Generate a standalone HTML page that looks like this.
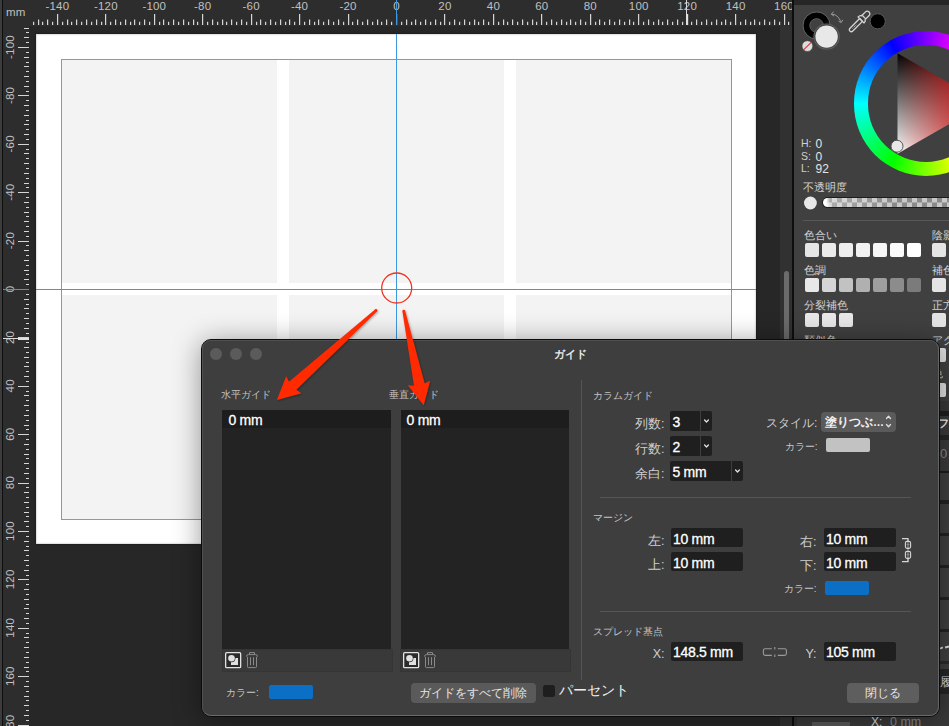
<!DOCTYPE html>
<html><head><meta charset="utf-8"><style>
*{margin:0;padding:0;box-sizing:border-box}
html,body{width:949px;height:726px;overflow:hidden;background:#272727;font-family:"Liberation Sans",sans-serif}
.abs{position:absolute}
.t{white-space:nowrap;line-height:16px}
.lbl{font-size:10px;color:#c4c4c4}
.sm{font-size:10px;color:#c8c8c8}
.rl{text-align:right}
.md{font-size:12.5px;color:#cfcfcf}
.val{font-size:14px;color:#fff;-webkit-text-stroke:0.3px #fff;letter-spacing:-0.3px}
.fld{background:#1f1f1f}
</style></head>
<body>

<div class="abs" style="left:0;top:0;width:792px;height:25.5px;background:#2d2d2d"></div>
<div class="abs" style="left:0;top:0;width:29px;height:726px;background:#2d2d2d"></div>
<div class="abs" style="left:0;top:0;width:2px;height:726px;background:#3c3c3c"></div>
<div class="abs" style="left:2px;top:0;width:1px;height:726px;background:#0f0f0f"></div>
<!-- page -->
<div class="abs" style="left:36px;top:34px;width:720px;height:510px;background:#fff;box-shadow:inset 0 0 2px rgba(0,0,0,.4),0 0 2px rgba(0,0,0,.5)"></div>
<!-- columns -->
<div class="abs" style="left:62px;top:60px;width:215px;height:223px;background:#f3f3f3"></div>
<div class="abs" style="left:289px;top:60px;width:215px;height:223px;background:#f3f3f3"></div>
<div class="abs" style="left:516px;top:60px;width:215px;height:223px;background:#f3f3f3"></div>
<div class="abs" style="left:62px;top:295px;width:215px;height:224px;background:#f3f3f3"></div>
<div class="abs" style="left:289px;top:295px;width:215px;height:224px;background:#f3f3f3"></div>
<div class="abs" style="left:516px;top:295px;width:215px;height:224px;background:#f3f3f3"></div>
<!-- margin rect -->
<div class="abs" style="left:61px;top:59px;width:671px;height:461px;border:1px solid #5aa5e6"></div>
<svg class="abs" style="left:0;top:0" width="949" height="726" viewBox="0 0 949 726">
<g fill="#d6d6d6"><rect x="33" y="21.8" width="1.2" height="3.2"/><rect x="38" y="19.5" width="1.2" height="5.5"/><rect x="42" y="21.8" width="1.2" height="3.2"/><rect x="47" y="19.5" width="1.2" height="5.5"/><rect x="52" y="21.8" width="1.2" height="3.2"/><rect x="57" y="14" width="1.2" height="11.0"/><rect x="62" y="21.8" width="1.2" height="3.2"/><rect x="67" y="19.5" width="1.2" height="5.5"/><rect x="71" y="21.8" width="1.2" height="3.2"/><rect x="76" y="19.5" width="1.2" height="5.5"/><rect x="81" y="21.8" width="1.2" height="3.2"/><rect x="86" y="19.5" width="1.2" height="5.5"/><rect x="91" y="21.8" width="1.2" height="3.2"/><rect x="96" y="19.5" width="1.2" height="5.5"/><rect x="101" y="21.8" width="1.2" height="3.2"/><rect x="105" y="14" width="1.2" height="11.0"/><rect x="110" y="21.8" width="1.2" height="3.2"/><rect x="115" y="19.5" width="1.2" height="5.5"/><rect x="120" y="21.8" width="1.2" height="3.2"/><rect x="125" y="19.5" width="1.2" height="5.5"/><rect x="130" y="21.8" width="1.2" height="3.2"/><rect x="134" y="19.5" width="1.2" height="5.5"/><rect x="139" y="21.8" width="1.2" height="3.2"/><rect x="144" y="19.5" width="1.2" height="5.5"/><rect x="149" y="21.8" width="1.2" height="3.2"/><rect x="154" y="14" width="1.2" height="11.0"/><rect x="159" y="21.8" width="1.2" height="3.2"/><rect x="163" y="19.5" width="1.2" height="5.5"/><rect x="168" y="21.8" width="1.2" height="3.2"/><rect x="173" y="19.5" width="1.2" height="5.5"/><rect x="178" y="21.8" width="1.2" height="3.2"/><rect x="183" y="19.5" width="1.2" height="5.5"/><rect x="188" y="21.8" width="1.2" height="3.2"/><rect x="193" y="19.5" width="1.2" height="5.5"/><rect x="197" y="21.8" width="1.2" height="3.2"/><rect x="202" y="14" width="1.2" height="11.0"/><rect x="207" y="21.8" width="1.2" height="3.2"/><rect x="212" y="19.5" width="1.2" height="5.5"/><rect x="217" y="21.8" width="1.2" height="3.2"/><rect x="222" y="19.5" width="1.2" height="5.5"/><rect x="226" y="21.8" width="1.2" height="3.2"/><rect x="231" y="19.5" width="1.2" height="5.5"/><rect x="236" y="21.8" width="1.2" height="3.2"/><rect x="241" y="19.5" width="1.2" height="5.5"/><rect x="246" y="21.8" width="1.2" height="3.2"/><rect x="251" y="14" width="1.2" height="11.0"/><rect x="256" y="21.8" width="1.2" height="3.2"/><rect x="260" y="19.5" width="1.2" height="5.5"/><rect x="265" y="21.8" width="1.2" height="3.2"/><rect x="270" y="19.5" width="1.2" height="5.5"/><rect x="275" y="21.8" width="1.2" height="3.2"/><rect x="280" y="19.5" width="1.2" height="5.5"/><rect x="285" y="21.8" width="1.2" height="3.2"/><rect x="289" y="19.5" width="1.2" height="5.5"/><rect x="294" y="21.8" width="1.2" height="3.2"/><rect x="299" y="14" width="1.2" height="11.0"/><rect x="304" y="21.8" width="1.2" height="3.2"/><rect x="309" y="19.5" width="1.2" height="5.5"/><rect x="314" y="21.8" width="1.2" height="3.2"/><rect x="318" y="19.5" width="1.2" height="5.5"/><rect x="323" y="21.8" width="1.2" height="3.2"/><rect x="328" y="19.5" width="1.2" height="5.5"/><rect x="333" y="21.8" width="1.2" height="3.2"/><rect x="338" y="19.5" width="1.2" height="5.5"/><rect x="343" y="21.8" width="1.2" height="3.2"/><rect x="348" y="14" width="1.2" height="11.0"/><rect x="352" y="21.8" width="1.2" height="3.2"/><rect x="357" y="19.5" width="1.2" height="5.5"/><rect x="362" y="21.8" width="1.2" height="3.2"/><rect x="367" y="19.5" width="1.2" height="5.5"/><rect x="372" y="21.8" width="1.2" height="3.2"/><rect x="377" y="19.5" width="1.2" height="5.5"/><rect x="381" y="21.8" width="1.2" height="3.2"/><rect x="386" y="19.5" width="1.2" height="5.5"/><rect x="391" y="21.8" width="1.2" height="3.2"/><rect x="396" y="14" width="1.2" height="11.0"/><rect x="401" y="21.8" width="1.2" height="3.2"/><rect x="406" y="19.5" width="1.2" height="5.5"/><rect x="411" y="21.8" width="1.2" height="3.2"/><rect x="415" y="19.5" width="1.2" height="5.5"/><rect x="420" y="21.8" width="1.2" height="3.2"/><rect x="425" y="19.5" width="1.2" height="5.5"/><rect x="430" y="21.8" width="1.2" height="3.2"/><rect x="435" y="19.5" width="1.2" height="5.5"/><rect x="440" y="21.8" width="1.2" height="3.2"/><rect x="444" y="14" width="1.2" height="11.0"/><rect x="449" y="21.8" width="1.2" height="3.2"/><rect x="454" y="19.5" width="1.2" height="5.5"/><rect x="459" y="21.8" width="1.2" height="3.2"/><rect x="464" y="19.5" width="1.2" height="5.5"/><rect x="469" y="21.8" width="1.2" height="3.2"/><rect x="474" y="19.5" width="1.2" height="5.5"/><rect x="478" y="21.8" width="1.2" height="3.2"/><rect x="483" y="19.5" width="1.2" height="5.5"/><rect x="488" y="21.8" width="1.2" height="3.2"/><rect x="493" y="14" width="1.2" height="11.0"/><rect x="498" y="21.8" width="1.2" height="3.2"/><rect x="503" y="19.5" width="1.2" height="5.5"/><rect x="507" y="21.8" width="1.2" height="3.2"/><rect x="512" y="19.5" width="1.2" height="5.5"/><rect x="517" y="21.8" width="1.2" height="3.2"/><rect x="522" y="19.5" width="1.2" height="5.5"/><rect x="527" y="21.8" width="1.2" height="3.2"/><rect x="532" y="19.5" width="1.2" height="5.5"/><rect x="536" y="21.8" width="1.2" height="3.2"/><rect x="541" y="14" width="1.2" height="11.0"/><rect x="546" y="21.8" width="1.2" height="3.2"/><rect x="551" y="19.5" width="1.2" height="5.5"/><rect x="556" y="21.8" width="1.2" height="3.2"/><rect x="561" y="19.5" width="1.2" height="5.5"/><rect x="566" y="21.8" width="1.2" height="3.2"/><rect x="570" y="19.5" width="1.2" height="5.5"/><rect x="575" y="21.8" width="1.2" height="3.2"/><rect x="580" y="19.5" width="1.2" height="5.5"/><rect x="585" y="21.8" width="1.2" height="3.2"/><rect x="590" y="14" width="1.2" height="11.0"/><rect x="595" y="21.8" width="1.2" height="3.2"/><rect x="599" y="19.5" width="1.2" height="5.5"/><rect x="604" y="21.8" width="1.2" height="3.2"/><rect x="609" y="19.5" width="1.2" height="5.5"/><rect x="614" y="21.8" width="1.2" height="3.2"/><rect x="619" y="19.5" width="1.2" height="5.5"/><rect x="624" y="21.8" width="1.2" height="3.2"/><rect x="629" y="19.5" width="1.2" height="5.5"/><rect x="633" y="21.8" width="1.2" height="3.2"/><rect x="638" y="14" width="1.2" height="11.0"/><rect x="643" y="21.8" width="1.2" height="3.2"/><rect x="648" y="19.5" width="1.2" height="5.5"/><rect x="653" y="21.8" width="1.2" height="3.2"/><rect x="658" y="19.5" width="1.2" height="5.5"/><rect x="662" y="21.8" width="1.2" height="3.2"/><rect x="667" y="19.5" width="1.2" height="5.5"/><rect x="672" y="21.8" width="1.2" height="3.2"/><rect x="677" y="19.5" width="1.2" height="5.5"/><rect x="682" y="21.8" width="1.2" height="3.2"/><rect x="687" y="14" width="1.2" height="11.0"/><rect x="691" y="21.8" width="1.2" height="3.2"/><rect x="696" y="19.5" width="1.2" height="5.5"/><rect x="701" y="21.8" width="1.2" height="3.2"/><rect x="706" y="19.5" width="1.2" height="5.5"/><rect x="711" y="21.8" width="1.2" height="3.2"/><rect x="716" y="19.5" width="1.2" height="5.5"/><rect x="721" y="21.8" width="1.2" height="3.2"/><rect x="725" y="19.5" width="1.2" height="5.5"/><rect x="730" y="21.8" width="1.2" height="3.2"/><rect x="735" y="14" width="1.2" height="11.0"/><rect x="740" y="21.8" width="1.2" height="3.2"/><rect x="745" y="19.5" width="1.2" height="5.5"/><rect x="750" y="21.8" width="1.2" height="3.2"/><rect x="754" y="19.5" width="1.2" height="5.5"/><rect x="759" y="21.8" width="1.2" height="3.2"/><rect x="764" y="19.5" width="1.2" height="5.5"/><rect x="769" y="21.8" width="1.2" height="3.2"/><rect x="774" y="19.5" width="1.2" height="5.5"/><rect x="779" y="21.8" width="1.2" height="3.2"/><rect x="784" y="14" width="1.2" height="11.0"/><rect x="788" y="21.8" width="1.2" height="3.2"/><rect x="24" y="28" width="5" height="1"/><rect x="26" y="32" width="3" height="1"/><rect x="24" y="37" width="5" height="1"/><rect x="26" y="42" width="3" height="1"/><rect x="18" y="47" width="11" height="1"/><rect x="26" y="52" width="3" height="1"/><rect x="24" y="57" width="5" height="1"/><rect x="26" y="62" width="3" height="1"/><rect x="24" y="66" width="5" height="1"/><rect x="26" y="71" width="3" height="1"/><rect x="24" y="76" width="5" height="1"/><rect x="26" y="81" width="3" height="1"/><rect x="24" y="86" width="5" height="1"/><rect x="26" y="91" width="3" height="1"/><rect x="18" y="95" width="11" height="1"/><rect x="26" y="100" width="3" height="1"/><rect x="24" y="105" width="5" height="1"/><rect x="26" y="110" width="3" height="1"/><rect x="24" y="115" width="5" height="1"/><rect x="26" y="120" width="3" height="1"/><rect x="24" y="124" width="5" height="1"/><rect x="26" y="129" width="3" height="1"/><rect x="24" y="134" width="5" height="1"/><rect x="26" y="139" width="3" height="1"/><rect x="18" y="144" width="11" height="1"/><rect x="26" y="149" width="3" height="1"/><rect x="24" y="153" width="5" height="1"/><rect x="26" y="158" width="3" height="1"/><rect x="24" y="163" width="5" height="1"/><rect x="26" y="168" width="3" height="1"/><rect x="24" y="173" width="5" height="1"/><rect x="26" y="178" width="3" height="1"/><rect x="24" y="183" width="5" height="1"/><rect x="26" y="187" width="3" height="1"/><rect x="18" y="192" width="11" height="1"/><rect x="26" y="197" width="3" height="1"/><rect x="24" y="202" width="5" height="1"/><rect x="26" y="207" width="3" height="1"/><rect x="24" y="212" width="5" height="1"/><rect x="26" y="216" width="3" height="1"/><rect x="24" y="221" width="5" height="1"/><rect x="26" y="226" width="3" height="1"/><rect x="24" y="231" width="5" height="1"/><rect x="26" y="236" width="3" height="1"/><rect x="18" y="241" width="11" height="1"/><rect x="26" y="245" width="3" height="1"/><rect x="24" y="250" width="5" height="1"/><rect x="26" y="255" width="3" height="1"/><rect x="24" y="260" width="5" height="1"/><rect x="26" y="265" width="3" height="1"/><rect x="24" y="270" width="5" height="1"/><rect x="26" y="274" width="3" height="1"/><rect x="24" y="279" width="5" height="1"/><rect x="26" y="284" width="3" height="1"/><rect x="18" y="289" width="11" height="1"/><rect x="26" y="294" width="3" height="1"/><rect x="24" y="299" width="5" height="1"/><rect x="26" y="304" width="3" height="1"/><rect x="24" y="308" width="5" height="1"/><rect x="26" y="313" width="3" height="1"/><rect x="24" y="318" width="5" height="1"/><rect x="26" y="323" width="3" height="1"/><rect x="24" y="328" width="5" height="1"/><rect x="26" y="333" width="3" height="1"/><rect x="18" y="337" width="11" height="1"/><rect x="26" y="342" width="3" height="1"/><rect x="24" y="347" width="5" height="1"/><rect x="26" y="352" width="3" height="1"/><rect x="24" y="357" width="5" height="1"/><rect x="26" y="362" width="3" height="1"/><rect x="24" y="366" width="5" height="1"/><rect x="26" y="371" width="3" height="1"/><rect x="24" y="376" width="5" height="1"/><rect x="26" y="381" width="3" height="1"/><rect x="18" y="386" width="11" height="1"/><rect x="26" y="391" width="3" height="1"/><rect x="24" y="395" width="5" height="1"/><rect x="26" y="400" width="3" height="1"/><rect x="24" y="405" width="5" height="1"/><rect x="26" y="410" width="3" height="1"/><rect x="24" y="415" width="5" height="1"/><rect x="26" y="420" width="3" height="1"/><rect x="24" y="425" width="5" height="1"/><rect x="26" y="429" width="3" height="1"/><rect x="18" y="434" width="11" height="1"/><rect x="26" y="439" width="3" height="1"/><rect x="24" y="444" width="5" height="1"/><rect x="26" y="449" width="3" height="1"/><rect x="24" y="454" width="5" height="1"/><rect x="26" y="458" width="3" height="1"/><rect x="24" y="463" width="5" height="1"/><rect x="26" y="468" width="3" height="1"/><rect x="24" y="473" width="5" height="1"/><rect x="26" y="478" width="3" height="1"/><rect x="18" y="483" width="11" height="1"/><rect x="26" y="487" width="3" height="1"/><rect x="24" y="492" width="5" height="1"/><rect x="26" y="497" width="3" height="1"/><rect x="24" y="502" width="5" height="1"/><rect x="26" y="507" width="3" height="1"/><rect x="24" y="512" width="5" height="1"/><rect x="26" y="516" width="3" height="1"/><rect x="24" y="521" width="5" height="1"/><rect x="26" y="526" width="3" height="1"/><rect x="18" y="531" width="11" height="1"/><rect x="26" y="536" width="3" height="1"/><rect x="24" y="541" width="5" height="1"/><rect x="26" y="546" width="3" height="1"/><rect x="24" y="550" width="5" height="1"/><rect x="26" y="555" width="3" height="1"/><rect x="24" y="560" width="5" height="1"/><rect x="26" y="565" width="3" height="1"/><rect x="24" y="570" width="5" height="1"/><rect x="26" y="575" width="3" height="1"/><rect x="18" y="579" width="11" height="1"/><rect x="26" y="584" width="3" height="1"/><rect x="24" y="589" width="5" height="1"/><rect x="26" y="594" width="3" height="1"/><rect x="24" y="599" width="5" height="1"/><rect x="26" y="604" width="3" height="1"/><rect x="24" y="608" width="5" height="1"/><rect x="26" y="613" width="3" height="1"/><rect x="24" y="618" width="5" height="1"/><rect x="26" y="623" width="3" height="1"/><rect x="18" y="628" width="11" height="1"/><rect x="26" y="633" width="3" height="1"/><rect x="24" y="637" width="5" height="1"/><rect x="26" y="642" width="3" height="1"/><rect x="24" y="647" width="5" height="1"/><rect x="26" y="652" width="3" height="1"/><rect x="24" y="657" width="5" height="1"/><rect x="26" y="662" width="3" height="1"/><rect x="24" y="667" width="5" height="1"/><rect x="26" y="671" width="3" height="1"/><rect x="18" y="676" width="11" height="1"/><rect x="26" y="681" width="3" height="1"/><rect x="24" y="686" width="5" height="1"/><rect x="26" y="691" width="3" height="1"/><rect x="24" y="696" width="5" height="1"/><rect x="26" y="700" width="3" height="1"/><rect x="24" y="705" width="5" height="1"/><rect x="26" y="710" width="3" height="1"/><rect x="24" y="715" width="5" height="1"/><rect x="26" y="720" width="3" height="1"/><rect x="18" y="725" width="11" height="1"/></g>
<g fill="#c0c0c0" font-family="Liberation Sans, sans-serif" font-size="11.5" letter-spacing="0.2"><text x="57.4" y="10" text-anchor="middle">-140</text><text x="105.9" y="10" text-anchor="middle">-120</text><text x="154.3" y="10" text-anchor="middle">-100</text><text x="202.7" y="10" text-anchor="middle">-80</text><text x="251.2" y="10" text-anchor="middle">-60</text><text x="299.6" y="10" text-anchor="middle">-40</text><text x="348.1" y="10" text-anchor="middle">-20</text><text x="396.5" y="10" text-anchor="middle">0</text><text x="444.9" y="10" text-anchor="middle">20</text><text x="493.4" y="10" text-anchor="middle">40</text><text x="541.8" y="10" text-anchor="middle">60</text><text x="590.3" y="10" text-anchor="middle">80</text><text x="638.7" y="10" text-anchor="middle">100</text><text x="687.1" y="10" text-anchor="middle">120</text><text x="735.6" y="10" text-anchor="middle">140</text><text x="784.0" y="10" text-anchor="middle">160</text><text x="0" y="0" transform="translate(14,47.0) rotate(-90)" text-anchor="middle">-100</text><text x="0" y="0" transform="translate(14,95.4) rotate(-90)" text-anchor="middle">-80</text><text x="0" y="0" transform="translate(14,143.8) rotate(-90)" text-anchor="middle">-60</text><text x="0" y="0" transform="translate(14,192.2) rotate(-90)" text-anchor="middle">-40</text><text x="0" y="0" transform="translate(14,240.6) rotate(-90)" text-anchor="middle">-20</text><text x="0" y="0" transform="translate(14,289.0) rotate(-90)" text-anchor="middle">0</text><text x="0" y="0" transform="translate(14,337.4) rotate(-90)" text-anchor="middle">20</text><text x="0" y="0" transform="translate(14,385.8) rotate(-90)" text-anchor="middle">40</text><text x="0" y="0" transform="translate(14,434.2) rotate(-90)" text-anchor="middle">60</text><text x="0" y="0" transform="translate(14,482.6) rotate(-90)" text-anchor="middle">80</text><text x="0" y="0" transform="translate(14,531.0) rotate(-90)" text-anchor="middle">100</text><text x="0" y="0" transform="translate(14,579.4) rotate(-90)" text-anchor="middle">120</text><text x="0" y="0" transform="translate(14,627.8) rotate(-90)" text-anchor="middle">140</text><text x="0" y="0" transform="translate(14,676.2) rotate(-90)" text-anchor="middle">160</text><text x="0" y="0" transform="translate(14,724.6) rotate(-90)" text-anchor="middle">180</text><text x="6" y="15.5">mm</text></g>
</svg>
<div class="abs" style="left:686px;top:0;width:1px;height:25px;background:#d8d8d8"></div>
<div class="abs" style="left:686px;top:14px;width:2px;height:11px;background:#e0e0e0"></div>
<div class="abs" style="left:3px;top:338px;width:26px;height:1px;background:#d8d8d8"></div>
<div class="abs" style="left:18px;top:338px;width:11px;height:1.6px;background:#e0e0e0"></div>
<!-- guides -->
<div class="abs" style="left:396px;top:0;width:1px;height:25px;background:#3d98e0"></div>
<div class="abs" style="left:396px;top:34px;width:1px;height:510px;background:#3d98e0"></div>
<div class="abs" style="left:36px;top:289px;width:720px;height:1px;background:#3d98e0"></div>
<div class="abs" style="left:3px;top:289px;width:26px;height:1px;background:#3d98e0"></div>
<!-- scroll track -->
<div class="abs" style="left:780px;top:25.5px;width:12px;height:701px;background:#313131"></div>
<div class="abs" style="left:792px;top:0;width:2px;height:726px;background:#0e0e0e"></div>
<div class="abs" style="left:783.5px;top:271px;width:5.5px;height:400px;border-radius:3px;background:#6b6b6b"></div>


<div class="abs" style="left:794px;top:0;width:155px;height:726px;background:#404040"></div>
<div class="abs" style="left:794px;top:0;width:155px;height:5px;background:#262626"></div>
<!-- color wheel -->
<div class="abs" style="left:853.7px;top:31.1px;width:144.6px;height:144.6px;border-radius:50%;background:conic-gradient(from 90deg,#f00,#ff0,#0f0,#0ff,#00f,#f0f,#f00)"></div>
<div class="abs" style="left:867.8px;top:45.2px;width:116.4px;height:116.4px;border-radius:50%;background:#404040"></div>
<svg class="abs" style="left:794px;top:0" width="155" height="240" viewBox="794 0 155 240">
<defs>
<linearGradient id="ringg" x1="808" y1="17" x2="826" y2="35" gradientUnits="userSpaceOnUse"><stop offset="0" stop-color="#000"/><stop offset="0.55" stop-color="#000"/><stop offset="1" stop-color="#3a3a3a"/></linearGradient>
<linearGradient id="tv" x1="0" y1="53" x2="0" y2="154" gradientUnits="userSpaceOnUse"><stop offset="0" stop-color="#000"/><stop offset="1" stop-color="#fff"/></linearGradient>
<linearGradient id="th" x1="897.5" y1="0" x2="984" y2="0" gradientUnits="userSpaceOnUse"><stop offset="0" stop-color="#e01010" stop-opacity="0"/><stop offset="1" stop-color="#e01010" stop-opacity="1"/></linearGradient>
</defs>
<polygon points="897.5,53.2 897.5,153.8 984.6,103.5" fill="url(#tv)"/>
<polygon points="897.5,53.2 897.5,153.8 984.6,103.5" fill="url(#th)"/>
<circle cx="897" cy="146.2" r="6" fill="#e8e8e8" stroke="#555" stroke-width="1"/>
<!-- fg/bg swatches -->
<circle cx="816.6" cy="25.5" r="10.1" fill="none" stroke="url(#ringg)" stroke-width="6.4"/>
<circle cx="816.6" cy="25.5" r="13.6" fill="none" stroke="#626262" stroke-width="1"/>
<circle cx="816.6" cy="25.5" r="6.8" fill="none" stroke="#5a5a5a" stroke-width="1"/>
<circle cx="826.6" cy="36.6" r="12.6" fill="#404040" stroke="#5c5c5c" stroke-width="1.2"/>
<circle cx="826.6" cy="36.6" r="11.2" fill="#e8e8e8"/>
<circle cx="807.4" cy="46.1" r="5.4" fill="#dcdcdc" stroke="#404040" stroke-width="0.6"/>
<line x1="803.8" y1="49.6" x2="811" y2="42.6" stroke="#e8313c" stroke-width="1.2"/>
<path d="M831.5,14.2 Q837,13.5 841,21.8" fill="none" stroke="#999" stroke-width="1"/>
<path d="M833.6,11.6 L831.3,14.2 L834.1,16.1" fill="none" stroke="#999" stroke-width="1"/>
<path d="M838.6,21.2 L841.2,22.6 L842.8,19.8" fill="none" stroke="#999" stroke-width="1"/>
<!-- eyedropper -->
<g transform="translate(850.8,30.2) rotate(45)" fill="none" stroke="#d4d4d4" stroke-width="1.3" stroke-linejoin="round">
<path d="M-2,-1.2 Q-2,1.3 0,1.3 Q2,1.3 2,-1.2 V-14.5 H-2 Z"/>
<path d="M-4.2,-14.5 H4.2 Q4.2,-17.2 2.6,-17.6 V-18.6 H-2.6 V-17.6 Q-4.2,-17.2 -4.2,-14.5 Z"/>
<path d="M-2.6,-18.6 V-23 Q-2.6,-25.8 0,-25.8 Q2.6,-25.8 2.6,-23 V-18.6"/>
</g>
<path d="M852.6,28.4 L856.2,24.8" stroke="#cfcfcf" stroke-width="0.9" stroke-dasharray="1.1 0.9"/>
<circle cx="877.7" cy="21.3" r="7.6" fill="#000" stroke="#595959" stroke-width="1"/>
<!-- opacity slider -->
<circle cx="810.4" cy="203" r="6.4" fill="#e8e8e8"/>
</svg>
<div class="abs" style="left:822px;top:197px;width:140px;height:11px;border-radius:5.5px;background:#1d1d1d"></div>
<div class="abs" style="left:823px;top:198px;width:140px;height:9px;border-radius:4.5px;background:linear-gradient(90deg,#fff 0,#fff 3px,rgba(255,255,255,.3) 7px,rgba(255,255,255,0) 70px),repeating-conic-gradient(#c8c8c8 0 25%,#8a8a8a 0 50%) 4px -0.5px/10px 10px"></div>
<div class="abs t" style="left:801px;top:137px;font-size:10.5px;color:#d0d0d0;line-height:12.5px">H:<br>S:<br>L:</div>
<div class="abs t" style="left:815.5px;top:138px;font-size:12px;color:#e4e4e4;line-height:12.5px">0<br>0<br>92</div>
<div class="abs t" style="left:803px;top:179px;font-size:11px;color:#d0d0d0">不透明度</div>
<div class="abs" style="left:803px;top:220px;width:146px;height:1px;background:#575757"></div>
<div class="abs t" style="left:804px;top:227px;font-size:11px;color:#d0d0d0">色合い</div>
<div class="abs t" style="left:932px;top:227px;font-size:11px;color:#d0d0d0">陰影</div>
<div class="abs t" style="left:804px;top:262px;font-size:11px;color:#d0d0d0">色調</div>
<div class="abs t" style="left:932px;top:262px;font-size:11px;color:#d0d0d0">補色</div>
<div class="abs t" style="left:804px;top:297px;font-size:11px;color:#d0d0d0">分裂補色</div>
<div class="abs t" style="left:932px;top:297px;font-size:11px;color:#d0d0d0">正方</div>
<div class="abs t" style="left:804px;top:332px;font-size:11px;color:#d0d0d0">類似色</div>
<div class="abs t" style="left:932px;top:332px;font-size:11px;color:#d0d0d0">アク</div>
<div class="abs" style="left:805px;top:243px;width:14px;height:14px;border-radius:2px;background:#e5e5e5"></div>
<div class="abs" style="left:822px;top:243px;width:14px;height:14px;border-radius:2px;background:#eaeaea"></div>
<div class="abs" style="left:839px;top:243px;width:14px;height:14px;border-radius:2px;background:#eeeeee"></div>
<div class="abs" style="left:856px;top:243px;width:14px;height:14px;border-radius:2px;background:#f2f2f2"></div>
<div class="abs" style="left:873px;top:243px;width:14px;height:14px;border-radius:2px;background:#f6f6f6"></div>
<div class="abs" style="left:890px;top:243px;width:14px;height:14px;border-radius:2px;background:#fafafa"></div>
<div class="abs" style="left:907px;top:243px;width:14px;height:14px;border-radius:2px;background:#ffffff"></div>
<div class="abs" style="left:805px;top:278px;width:14px;height:14px;border-radius:2px;background:#e8e8e8"></div>
<div class="abs" style="left:822px;top:278px;width:14px;height:14px;border-radius:2px;background:#d5d5d5"></div>
<div class="abs" style="left:839px;top:278px;width:14px;height:14px;border-radius:2px;background:#c2c2c2"></div>
<div class="abs" style="left:856px;top:278px;width:14px;height:14px;border-radius:2px;background:#b0b0b0"></div>
<div class="abs" style="left:873px;top:278px;width:14px;height:14px;border-radius:2px;background:#9e9e9e"></div>
<div class="abs" style="left:890px;top:278px;width:14px;height:14px;border-radius:2px;background:#8c8c8c"></div>
<div class="abs" style="left:907px;top:278px;width:14px;height:14px;border-radius:2px;background:#7b7b7b"></div>
<div class="abs" style="left:805px;top:313px;width:14px;height:14px;border-radius:2px;background:#e8e8e8"></div>
<div class="abs" style="left:822px;top:313px;width:14px;height:14px;border-radius:2px;background:#e8e8e8"></div>
<div class="abs" style="left:839px;top:313px;width:14px;height:14px;border-radius:2px;background:#e8e8e8"></div>
<div class="abs" style="left:932px;top:243px;width:14px;height:14px;border-radius:2px;background:#e4e4e4"></div>
<div class="abs" style="left:932px;top:278px;width:14px;height:14px;border-radius:2px;background:#e4e4e4"></div>
<div class="abs" style="left:932px;top:313px;width:14px;height:14px;border-radius:2px;background:#e4e4e4"></div>
<div class="abs" style="left:932px;top:348px;width:14px;height:14px;border-radius:2px;background:#e4e4e4"></div>

<div class="abs" style="left:932px;top:383px;width:14px;height:14px;border-radius:2px;background:#e4e4e4"></div>
<div class="abs t" style="left:932px;top:365px;font-size:11px;color:#d0d0d0">色</div>
<div class="abs" style="left:794px;top:401px;width:155px;height:10px;background:#383838"></div>
<div class="abs" style="left:794px;top:411px;width:155px;height:5px;background:#1f1f1f"></div>
<div class="abs" style="left:794px;top:416px;width:155px;height:19px;background:#3a3a3a"></div>
<div class="abs t" style="left:938px;top:415px;font-size:11px;font-weight:bold;color:#f0f0f0">フ</div>
<div class="abs" style="left:794px;top:435px;width:155px;height:5px;background:#262626"></div>
<div class="abs" style="left:794px;top:440px;width:155px;height:31px;background:#3b3b3b"></div>
<div class="abs t" style="left:940px;top:446px;font-size:13px;color:#8a8a8a">0</div>
<div class="abs" style="left:794px;top:471px;width:155px;height:1.5px;background:#1e1e1e"></div>
<div class="abs" style="left:794px;top:500px;width:155px;height:3.5px;background:#232323"></div>
<div class="abs" style="left:794px;top:533px;width:155px;height:3px;background:#232323"></div>
<div class="abs" style="left:794px;top:565px;width:155px;height:3px;background:#232323"></div>
<div class="abs" style="left:794px;top:597px;width:155px;height:3px;background:#232323"></div>
<div class="abs" style="left:794px;top:629px;width:155px;height:3px;background:#232323"></div>
<div class="abs" style="left:940px;top:647px;width:3px;height:2px;background:#ddd;transform:rotate(-30deg)"></div>
<div class="abs" style="left:945px;top:646px;width:4px;height:2px;background:#ddd;transform:rotate(-15deg)"></div>
<div class="abs" style="left:794px;top:661px;width:155px;height:3px;background:#2c2c2c"></div>
<div class="abs" style="left:794px;top:669px;width:155px;height:25px;background:#262626"></div>
<div class="abs t" style="left:940px;top:674px;font-size:12px;color:#d8d8d8">履</div>
<div class="abs" style="left:794px;top:694px;width:155px;height:32px;background:#3a3a3a"></div>
<div class="abs" style="left:794px;top:694px;width:3px;height:32px;background:#323232"></div>
<div class="abs" style="left:812px;top:722px;width:38px;height:4px;background:#5a5a5a"></div>
<div class="abs t" style="left:871px;top:714px;font-size:12px;color:#dcdcdc">X:</div>
<div class="abs t" style="left:890px;top:714px;font-size:12.5px;color:#8c8c8c">0 mm</div>


<div class="abs" style="left:201px;top:339px;width:739px;height:378px;border-radius:10px;box-shadow:0 3px 28px rgba(0,0,0,.4)"></div>
<div class="abs" style="left:201px;top:339px;width:739px;height:378px;background:#3e3e3e;border:1px solid #0c0c0c;border-radius:10px"></div>
<div class="abs" style="left:202px;top:340px;width:737px;height:376px;border:1px solid;border-color:#505050 #646464 #6a6a6a #505050;border-radius:9px"></div>
<div class="abs" style="left:210px;top:348px;width:12px;height:12px;border-radius:50%;background:#5b5b5b"></div>
<div class="abs" style="left:230px;top:348px;width:12px;height:12px;border-radius:50%;background:#5b5b5b"></div>
<div class="abs" style="left:250px;top:348px;width:12px;height:12px;border-radius:50%;background:#5b5b5b"></div>
<div class="abs t" style="left:520px;top:346px;width:100px;text-align:center;font-size:10.5px;font-weight:bold;color:#e8e8e8">ガイド</div>
<div class="abs t lbl" style="left:221px;top:387px">水平ガイド</div>
<div class="abs t lbl" style="left:389px;top:387px">垂直ガイド</div>
<!-- lists -->
<div class="abs" style="left:222px;top:410px;width:169px;height:238.5px;background:#232323"></div>
<div class="abs" style="left:222px;top:410px;width:169px;height:18px;background:#1d1d1d"></div>
<div class="abs t val" style="left:228.5px;top:412px">0 mm</div>
<div class="abs" style="left:221.5px;top:648.5px;width:171px;height:23px;background:#393939;border:1px solid #353535"></div>
<div class="abs" style="left:401px;top:410px;width:168px;height:238.5px;background:#232323"></div>
<div class="abs" style="left:401px;top:410px;width:168px;height:18px;background:#1d1d1d"></div>
<div class="abs t val" style="left:406.6px;top:412px">0 mm</div>
<div class="abs" style="left:399.5px;top:648.5px;width:171px;height:23px;background:#393939;border:1px solid #353535"></div>
<svg class="abs" style="left:0;top:0" width="949" height="726">
<g transform="translate(225,652)"><rect x="0.65" y="0.65" width="15" height="15" rx="1" fill="#2b2b2b" stroke="#e2e2e2" stroke-width="1.3"/>
<rect x="6" y="6" width="7" height="7" fill="#e0e0e0"/>
<circle cx="6.5" cy="6.3" r="3.9" fill="#2b2b2b"/>
<circle cx="6.5" cy="6.3" r="3.3" fill="#e0e0e0"/></g>
<g transform="translate(246,652)"><g fill="none" stroke="#8a8a8a" stroke-width="1">
<path d="M0.5,4.6 Q0.5,2.6 2.5,2.6 H9.5 Q11.5,2.6 11.5,4.6"/>
<path d="M3.5,2.6 V0.6 H8.5 V2.6"/>
<path d="M1.5,4.8 V14.8 Q1.5,15.6 2.5,15.6 H9.5 Q10.5,15.6 10.5,14.8 V4.8"/>
<path d="M4.5,5.2 V13.2 M7.5,5.2 V13.2"/>
</g></g>
<g transform="translate(403,652)"><rect x="0.65" y="0.65" width="15" height="15" rx="1" fill="#2b2b2b" stroke="#e2e2e2" stroke-width="1.3"/>
<rect x="6" y="6" width="7" height="7" fill="#e0e0e0"/>
<circle cx="6.5" cy="6.3" r="3.9" fill="#2b2b2b"/>
<circle cx="6.5" cy="6.3" r="3.3" fill="#e0e0e0"/></g>
<g transform="translate(424,652)"><g fill="none" stroke="#8a8a8a" stroke-width="1">
<path d="M0.5,4.6 Q0.5,2.6 2.5,2.6 H9.5 Q11.5,2.6 11.5,4.6"/>
<path d="M3.5,2.6 V0.6 H8.5 V2.6"/>
<path d="M1.5,4.8 V14.8 Q1.5,15.6 2.5,15.6 H9.5 Q10.5,15.6 10.5,14.8 V4.8"/>
<path d="M4.5,5.2 V13.2 M7.5,5.2 V13.2"/>
</g></g>
<path d="M906.6,544.6 H909.4 M906.6,554.6 H909.4" stroke="#9a9a9a" stroke-width="0.9"/>
<path d="M908,539 V562" stroke="#8e8e8e" stroke-width="1.2"/>
<g fill="none" stroke="#d6d6d6" stroke-width="1.1">
<path d="M902,538.6 H908 V541 M902,561.6 H908 V559"/>
<rect x="905.4" y="541.4" width="5.2" height="7" rx="1.6"/>
<rect x="905.4" y="551.4" width="5.2" height="7" rx="1.6"/>
</g>
<g fill="none" stroke="#9a9a9a" stroke-width="1.1">
<path d="M771.8,648.8 H765.2 Q763.4,648.8 763.4,650.6 V653.6 Q763.4,655.4 765.2,655.4 H771.8"/>
<path d="M777.8,648.8 H784.6 Q786.4,648.8 786.4,650.6 V653.6 Q786.4,655.4 784.6,655.4 H777.8"/>
<path d="M774.8,647 V649.4 M774.8,654.6 V657"/>
</g>
</svg>
<div class="abs" style="left:581px;top:380px;width:1px;height:300px;background:#555"></div>
<div class="abs t sm" style="left:226px;top:685px">カラー:</div>
<div class="abs" style="left:269px;top:685px;width:44px;height:14px;border-radius:2px;background:#0b6fc6"></div>
<div class="abs" style="left:410.5px;top:682.5px;width:125.5px;height:20px;border-radius:4px;background:#5a5a5a"></div>
<div class="abs t" style="left:410.5px;top:685px;width:125.5px;text-align:center;font-size:12px;color:#e6e6e6">ガイドをすべて削除</div>
<div class="abs" style="left:543px;top:685px;width:12px;height:12px;border-radius:2.5px;background:#1e1e1e"></div>
<div class="abs t" style="left:559px;top:682px;font-size:14px;color:#f0f0f0">パーセント</div>
<!-- right -->
<div class="abs t lbl" style="left:593px;top:387.5px">カラムガイド</div>
<div class="abs t rl md" style="left:600px;top:415.5px;width:64.5px">列数:</div>
<div class="abs t rl md" style="left:600px;top:440.5px;width:64.5px">行数:</div>
<div class="abs t rl md" style="left:600px;top:465.5px;width:64.5px">余白:</div>
<div class="abs fld" style="left:670px;top:411px;width:29.5px;height:20px;border-radius:2px 0 0 2px"></div>
<div class="abs fld" style="left:701px;top:411px;width:11px;height:20px;border-radius:0 2px 2px 0"></div>
<div class="abs t val" style="left:672.5px;top:413.5px">3</div>
<div class="abs fld" style="left:670px;top:436px;width:29.5px;height:20px;border-radius:2px 0 0 2px"></div>
<div class="abs fld" style="left:701px;top:436px;width:11px;height:20px;border-radius:0 2px 2px 0"></div>
<div class="abs t val" style="left:672.5px;top:438.5px">2</div>
<div class="abs fld" style="left:670px;top:461px;width:60.5px;height:20px;border-radius:2px 0 0 2px"></div>
<div class="abs fld" style="left:732px;top:461px;width:11px;height:20px;border-radius:0 2px 2px 0"></div>
<div class="abs t val" style="left:672.5px;top:463.5px">5 mm</div>
<div class="abs t rl md" style="left:740px;top:414.5px;width:77.5px;font-size:12.2px">スタイル:</div>
<div class="abs" style="left:821px;top:411.5px;width:75px;height:20px;border-radius:4px;background:#5a5a5a"></div>
<div class="abs t" style="left:825px;top:413.5px;font-size:11.6px;font-weight:bold;color:#f2f2f2">塗りつぶ<span style="font-size:11px">…</span></div>
<svg class="abs" style="left:0;top:0" width="949" height="726">
<g fill="none" stroke="#e0e0e0" stroke-width="1.3" stroke-linecap="round" stroke-linejoin="round">
<path d="M704.6,420 L706.5,422 L708.4,420"/>
<path d="M704.6,445 L706.5,447 L708.4,445"/>
<path d="M735.6,470 L737.5,472 L739.4,470"/>
<path d="M886.5,418.5 L888.5,416.3 L890.5,418.5 M886.5,424.5 L888.5,426.7 L890.5,424.5"/>
</g>
</svg>
<div class="abs t sm rl" style="left:740px;top:438.5px;width:77.5px">カラー:</div>
<div class="abs" style="left:826px;top:438px;width:44px;height:14px;border-radius:2px;background:#c2c2c2"></div>
<div class="abs" style="left:600px;top:497px;width:311px;height:1px;background:#555"></div>
<div class="abs t lbl" style="left:593px;top:509.5px">マージン</div>
<div class="abs t rl md" style="left:600px;top:533px;width:64.5px">左:</div>
<div class="abs t rl md" style="left:600px;top:557px;width:64.5px">上:</div>
<div class="abs t rl md" style="left:740px;top:533.5px;width:76.5px">右:</div>
<div class="abs t rl md" style="left:740px;top:557.5px;width:76.5px">下:</div>
<div class="abs fld" style="left:671px;top:528px;width:72px;height:19px;border-radius:2px"></div>
<div class="abs fld" style="left:671px;top:552px;width:72px;height:19px;border-radius:2px"></div>
<div class="abs fld" style="left:824px;top:528px;width:72px;height:19px;border-radius:2px"></div>
<div class="abs fld" style="left:824px;top:552px;width:72px;height:19px;border-radius:2px"></div>
<div class="abs t val" style="left:673px;top:531px">10 mm</div>
<div class="abs t val" style="left:673px;top:555px">10 mm</div>
<div class="abs t val" style="left:826px;top:531px">10 mm</div>
<div class="abs t val" style="left:826px;top:555px">10 mm</div>
<div class="abs t sm rl" style="left:740px;top:581px;width:76.5px">カラー:</div>
<div class="abs" style="left:825px;top:581px;width:44px;height:14px;border-radius:2px;background:#0b6fc6"></div>
<div class="abs" style="left:600px;top:611px;width:311px;height:1px;background:#555"></div>
<div class="abs t lbl" style="left:593px;top:623.5px">スプレッド基点</div>
<div class="abs t rl md" style="left:600px;top:646px;width:64.5px">X:</div>
<div class="abs t rl md" style="left:740px;top:646px;width:76.5px">Y:</div>
<div class="abs fld" style="left:671px;top:642px;width:72px;height:19px;border-radius:2px"></div>
<div class="abs fld" style="left:824px;top:642px;width:72px;height:19px;border-radius:2px"></div>
<div class="abs t val" style="left:673px;top:643.5px">148.5 mm</div>
<div class="abs t val" style="left:826px;top:643.5px">105 mm</div>
<div class="abs" style="left:847px;top:682.5px;width:72px;height:20px;border-radius:4px;background:#5e5e5e"></div>
<div class="abs t" style="left:847px;top:684.5px;width:72px;text-align:center;font-size:12px;color:#e6e6e6">閉じる</div>


<svg class="abs" style="left:0;top:0" width="949" height="726">
<defs><filter id="sh" x="-20%" y="-20%" width="140%" height="140%"><feDropShadow dx="0.8" dy="1" stdDeviation="1" flood-color="#000" flood-opacity="0.35"/></filter></defs>
<circle cx="396.7" cy="288" r="15" fill="none" stroke="#f0321e" stroke-width="1.3"/>
<g fill="#ff2b06" filter="url(#sh)">
<polygon points="375.06,309.46 289.01,381.78 286.18,376.26 276.90,400.00 301.46,393.18 296.25,389.80 376.94,311.54"/><circle cx="376.00" cy="310.50" r="1.40"/>
<polygon points="402.43,311.39 414.03,385.67 407.83,385.35 423.70,405.30 430.14,380.64 424.60,383.44 405.17,310.81"/><circle cx="403.80" cy="311.10" r="1.40"/>
</g>
</svg>

</body></html>
